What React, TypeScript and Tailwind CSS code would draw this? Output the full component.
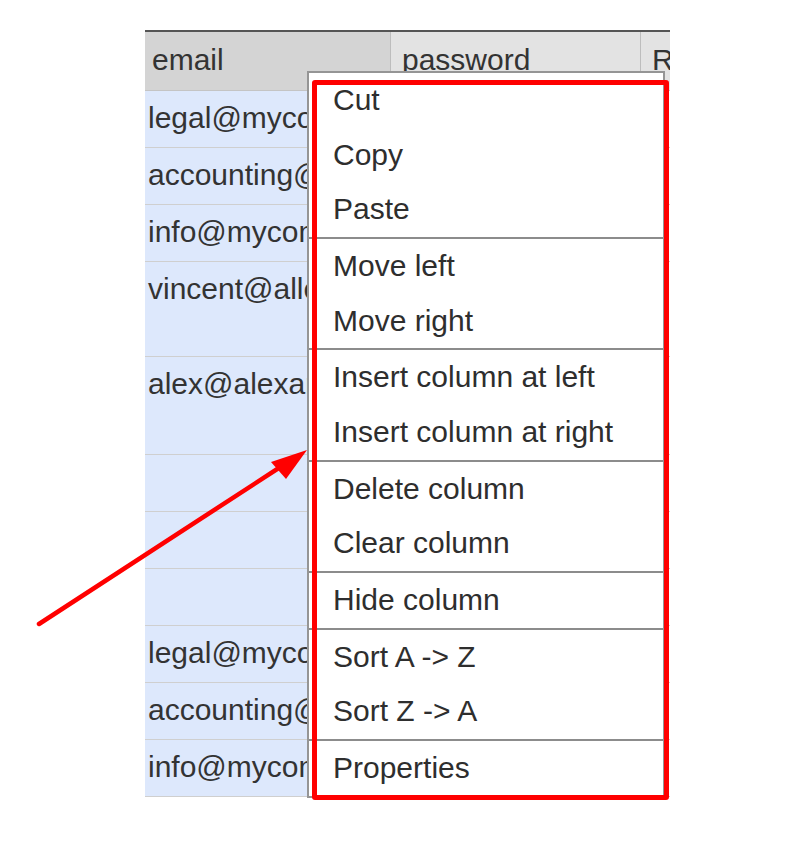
import React from "react";

const rows: { email: string; h: string }[] = [
  { email: "legal@mycompany.com", h: "h-[57px]" },
  { email: "accounting@mycompany.com", h: "h-[57px]" },
  { email: "info@mycompany.com", h: "h-[57px]" },
  { email: "vincent@allcompany.com", h: "h-[95px]" },
  { email: "alex@alexander.com", h: "h-[98px]" },
  { email: "", h: "h-[57px]" },
  { email: "", h: "h-[57px]" },
  { email: "", h: "h-[57px]" },
  { email: "legal@mycompany.com", h: "h-[57px]" },
  { email: "accounting@mycompany.com", h: "h-[57px]" },
  { email: "info@mycompany.com", h: "h-[57px]" },
];

const groups: string[][] = [
  ["Cut", "Copy", "Paste"],
  ["Move left", "Move right"],
  ["Insert column at left", "Insert column at right"],
  ["Delete column", "Clear column"],
  ["Hide column"],
  ["Sort A -> Z", "Sort Z -> A"],
  ["Properties"],
];

export default function App() {
  return (
    <div
      className="relative w-[793px] h-[863px] bg-white overflow-hidden text-[#333]"
      style={{ fontFamily: '"Liberation Sans", Arial, sans-serif' }}
    >
      <div className="pt-[30px] pl-[145px]">
        <div className="w-[525px] text-[30px]">
          {/* header */}
          <div className="flex h-[61px] border-t-2 border-b border-t-[#555] border-b-[#c4c4c4]">
            <div className="w-[246px] bg-[#d4d4d4] border-r border-[#bdbdbd] pl-[7px] pb-[3px] flex items-center">
              email
            </div>
            <div className="w-[250px] bg-[#e3e3e3] border-r border-[#bdbdbd] pl-[11px] pb-[3px] flex items-center">
              password
            </div>
            <div className="flex-1 bg-[#e3e3e3] pl-[11px] pb-[3px] flex items-center overflow-hidden">
              R
            </div>
          </div>
          {/* body */}
          {rows.map((r, i) => (
            <div key={i} className={`flex ${r.h} border-b border-[#cfcfcf]`}>
              <div className="w-[246px] bg-[#dde8fc] pl-[3px] pt-[10px] leading-[34px] whitespace-nowrap overflow-hidden">
                {r.email}
              </div>
              <div className="flex-1 bg-white" />
            </div>
          ))}
        </div>
      </div>

      {/* context menu */}
      <div className="absolute left-[307px] top-[71px] w-[358px] bg-white border-2 border-[#959595] text-[30px] text-[#2e2e2e]">
        {groups.map((g, gi) => (
          <div key={gi} className={gi > 0 ? "border-t-2 border-[#8c8c8c]" : ""}>
            {g.map((item) => (
              <div key={item} className="h-[54.7px] flex items-center pl-[24px] pb-[2px] whitespace-nowrap">
                {item}
              </div>
            ))}
          </div>
        ))}
      </div>

      {/* red annotation rectangle */}
      <div className="absolute left-[312px] top-[80px] w-[357px] h-[720px] border-[5px] border-[#ff0000] rounded-[3px] pointer-events-none" />

      {/* red arrow */}
      <svg className="absolute left-0 top-0 pointer-events-none" width="793" height="863" viewBox="0 0 793 863">
        <line x1="39" y1="624" x2="288" y2="462" stroke="#ff0000" strokeWidth="4.5" strokeLinecap="round" />
        <polygon points="307,450 271,462 286,479" fill="#ff0000" />
      </svg>
    </div>
  );
}
